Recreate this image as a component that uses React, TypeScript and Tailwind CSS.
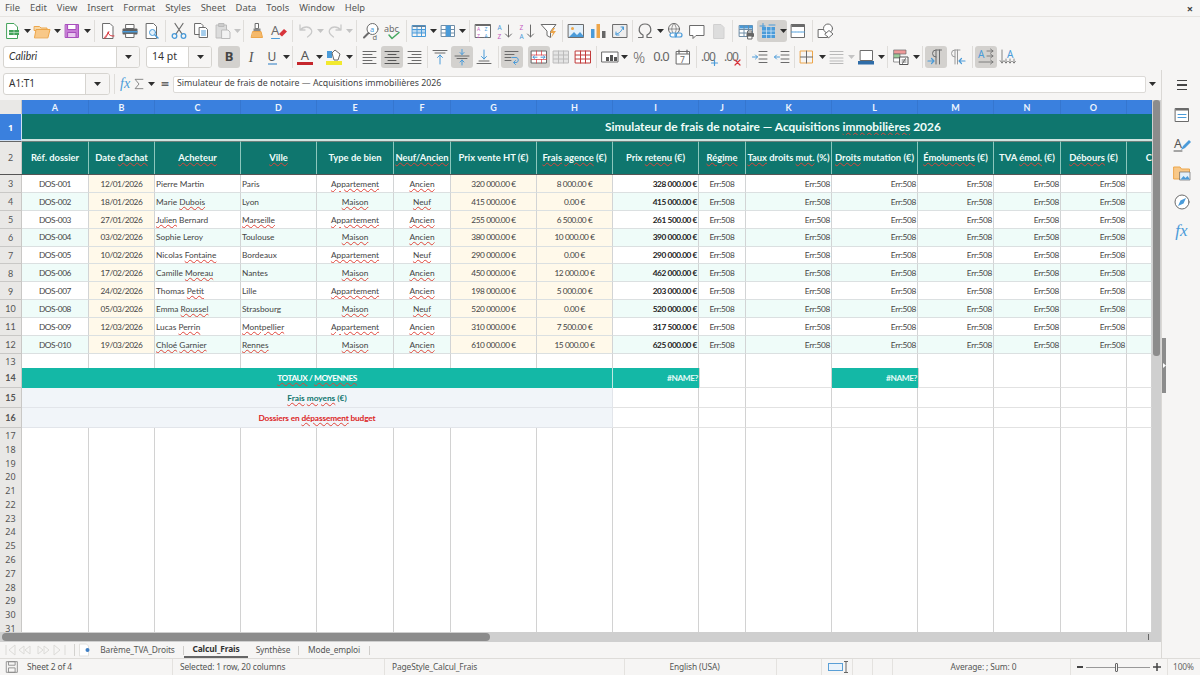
import React from "react";

const BLUE = "#4a9bd9";
const GRAY = "#6b6b6b";
const ORANGE = "#eda64a";
const RED = "#d8343b";

const COLS =
  "grid grid-cols-[22px_67px_66px_86px_76px_77px_57px_86px_76px_86px_47px_86px_86px_76px_67px_66px_25px]";

const Svg: React.FC<{ children: React.ReactNode; size?: number }> = ({ children, size = 18 }) => (
  <svg width={size} height={size} viewBox="0 0 18 18" fill="none" strokeWidth="1" strokeLinecap="round" strokeLinejoin="round">
    {children}
  </svg>
);

const Lines: React.FC<{ d: number[][]; c?: string }> = ({ d, c = GRAY }) => (
  <>
    {d.map(([x1, x2, y], i) => (
      <line key={i} x1={x1} x2={x2} y1={y} y2={y} stroke={c} />
    ))}
  </>
);

const TableGrid: React.FC<{ stroke?: string; fill?: string; head?: string }> = ({ stroke = BLUE, fill = "none", head }) => (
  <>
    <rect x="2.5" y="3.5" width="13" height="11" fill={fill} stroke={stroke} />
    {head && <rect x="2.5" y="3.5" width="13" height="3" fill={head} />}
    <path d="M2.5 7.5h13M2.5 11h13M7 3.5v11M11.5 3.5v11" stroke={stroke} />
  </>
);

const icons: Record<string, React.ReactNode> = {
  newDoc: (
    <>
      <path d="M4 1.5h7l3.5 3.5v11.5H4z" fill="#fff" stroke="#43a35a" />
      <rect x="6" y="8" width="10" height="5" fill="#43a35a" />
      <path d="M6 10.5h10M11 8v5" stroke="#d8f0dd" strokeWidth=".6" />
    </>
  ),
  open: (
    <>
      <path d="M1.5 4.5h5l1.5 1.5h6v2.5h-12.5z" fill="#f7d9a8" stroke={ORANGE} />
      <path d="M1.5 15.5l1.5-8h14l-2 8z" fill="#f8c888" stroke={ORANGE} />
    </>
  ),
  save: (
    <>
      <rect x="2.5" y="2.5" width="13" height="13" fill="#c77bd6" stroke="#a84fbd" />
      <rect x="5" y="2.5" width="8" height="5" fill="#fff" stroke="#a84fbd" />
      <rect x="5" y="10.5" width="8" height="5" fill="#e8c8ee" stroke="#a84fbd" />
    </>
  ),
  pdf: (
    <>
      <path d="M4 1.5h7l3 3v12H4z" fill="#fff" stroke={GRAY} />
      <path d="M10 10c-3 4-5 5.5-4.5 6.3.7.7 3-3 3.8-6.5 M9 11c1 2 3 3.5 6 3" stroke={RED} />
    </>
  ),
  print: (
    <>
      <rect x="5" y="2.5" width="8" height="4" fill="#fff" stroke={GRAY} />
      <rect x="1.5" y="6.5" width="15" height="6" rx="1" fill="#606060" />
      <rect x="1.5" y="9" width="15" height="1.5" fill={BLUE} />
      <rect x="5" y="11.5" width="8" height="4" fill="#fff" stroke={GRAY} />
    </>
  ),
  preview: (
    <>
      <path d="M3.5 1.5h7l3 3v12h-10z" fill="#fff" stroke={GRAY} />
      <circle cx="9.5" cy="10.5" r="3" fill="#e5f1fa" stroke={BLUE} />
      <path d="M12 13l3 3" stroke={BLUE} strokeWidth="1.5" />
    </>
  ),
  cut: (
    <>
      <path d="M5 1.5l7 10.5M13 1.5l-7 10.5" stroke={GRAY} strokeWidth="1.2" />
      <circle cx="4.5" cy="14" r="2.3" stroke={BLUE} strokeWidth="1.3" />
      <circle cx="13.5" cy="14" r="2.3" stroke={BLUE} strokeWidth="1.3" />
    </>
  ),
  copy: (
    <>
      <path d="M3 1.5h6l2 2v9H3z" fill="#fff" stroke={GRAY} />
      <path d="M7.5 5.5h6l2 2v8h-8z" fill="#fff" stroke={GRAY} />
      <path d="M9.5 9h4M9.5 11h4M9.5 13h4" stroke={BLUE} />
    </>
  ),
  paste: (
    <>
      <rect x="2.5" y="3" width="10" height="13" fill="#dcdcdc" stroke="#bbb" />
      <rect x="5" y="1.5" width="5" height="3" fill="#ccc" stroke="#bbb" />
      <path d="M8 8h6l2 2v6.5H8z" fill="#f2f2f2" stroke="#bbb" />
    </>
  ),
  clone: (
    <>
      <path d="M7.5 1.5h3v5h-3z" fill="#fff" stroke={GRAY} />
      <path d="M5.5 6.5h7v3h-7z" fill="#888" />
      <path d="M5 9.5h8l1.5 6h-11z" fill="#f5b96a" stroke={ORANGE} />
    </>
  ),
  clear: (
    <>
      <text x="1" y="13" fontFamily="'Noto Sans',sans-serif" fontSize="13" fill={GRAY}>A</text>
      <path d="M1.5 16.5h8" stroke={BLUE} />
      <path d="M9 12l5-5 3 2.5-5 5z" fill={RED} />
    </>
  ),
  undo: <path d="M3 3v5h5M3.5 8c3-4 9-4 11 0 1 2.5-1 5-4 7" stroke="#c9c9c9" strokeWidth="1.3" />,
  redo: <path d="M15 3v5h-5M14.5 8c-3-4-9-4-11 0-1 2.5 1 5 4 7" stroke="#c9c9c9" strokeWidth="1.3" />,
  find: (
    <>
      <circle cx="10.5" cy="7" r="5.5" fill="#fff" stroke={GRAY} />
      <text x="8" y="9.5" fontFamily="'Noto Sans',sans-serif" fontSize="7.5" fill={BLUE}>a</text>
      <path d="M6.5 11l-4.5 4.5" stroke={GRAY} strokeWidth="2" />
      <text x="10.5" y="17.5" fontFamily="'Noto Sans',sans-serif" fontSize="7.5" fill={GRAY}>d</text>
    </>
  ),
  spell: (
    <>
      <text x="0" y="9.5" fontFamily="'Noto Sans',sans-serif" fontSize="9" fill={GRAY}>abc</text>
      <path d="M5 13l3 3.5 7-6" stroke="#45a860" strokeWidth="1.5" />
    </>
  ),
  rowT: (
    <>
      <rect x="2.5" y="7.5" width="13" height="3.5" fill="#bcd9f1" />
      <TableGrid />
      <rect x="2.5" y="3.5" width="13" height="1.5" fill="#5f7f99" />
    </>
  ),
  colT: (
    <>
      <TableGrid stroke="#6f8da6" fill="#fff" />
      <rect x="7" y="3.5" width="4.5" height="11" fill={BLUE} />
    </>
  ),
  sort: (
    <>
      <rect x="1.5" y="2.5" width="15" height="13" fill="#fff" stroke={GRAY} />
      <rect x="1.5" y="2.5" width="15" height="1.5" fill={GRAY} />
      <text x="3" y="8.5" fontFamily="'Noto Sans',sans-serif" fontSize="5" fill="#c45cc0">A</text>
      <text x="3" y="15.5" fontFamily="'Noto Sans',sans-serif" fontSize="5" fill="#c45cc0">Z</text>
      <text x="10.5" y="8.5" fontFamily="'Noto Sans',sans-serif" fontSize="5" fill={BLUE}>Z</text>
      <text x="10.5" y="15.5" fontFamily="'Noto Sans',sans-serif" fontSize="5" fill={BLUE}>A</text>
    </>
  ),
  asc: (
    <>
      <text x="1.5" y="7.5" fontFamily="'Noto Sans',sans-serif" fontSize="6.5" fill={BLUE}>A</text>
      <text x="1.5" y="16.5" fontFamily="'Noto Sans',sans-serif" fontSize="6.5" fill="#c45cc0">Z</text>
      <path d="M12.5 3v12M9.5 12l3 3 3-3" stroke={GRAY} />
    </>
  ),
  desc: (
    <>
      <text x="1.5" y="7.5" fontFamily="'Noto Sans',sans-serif" fontSize="6.5" fill="#c45cc0">Z</text>
      <text x="1.5" y="16.5" fontFamily="'Noto Sans',sans-serif" fontSize="6.5" fill={BLUE}>A</text>
      <path d="M12.5 3v12M9.5 12l3 3 3-3" stroke={GRAY} />
    </>
  ),
  filter: (
    <>
      <path d="M1.5 2.5h14.5l-5.5 7v6l-3.5-2v-4z" fill="#fff" stroke={GRAY} />
      <path d="M13 6l-3 5h3l-2 5 5-7h-3l2-3z" fill={ORANGE} />
    </>
  ),
  image: (
    <>
      <rect x="1.5" y="2.5" width="15" height="13" fill="#e3f0fa" stroke={GRAY} />
      <circle cx="5.5" cy="6.5" r="1.5" fill={ORANGE} />
      <path d="M2 15l5-5 3 3 3-3 3.5 4v1z" fill={BLUE} />
    </>
  ),
  chart: (
    <>
      <rect x="2" y="7" width="3.5" height="9" fill={BLUE} />
      <rect x="7.5" y="2" width="3.5" height="14" fill={ORANGE} />
      <rect x="13" y="9" width="3.5" height="7" fill="#666" />
    </>
  ),
  pivot: (
    <>
      <rect x="2" y="2.5" width="14" height="13" fill="#eee" stroke={GRAY} />
      <path d="M5 12c3 0 6-3 7-7M10 5h2.5v2.5M5 10v3h3" stroke={BLUE} />
    </>
  ),
  omega: <path d="M2.5 15.5h4.5v-2.500c-6-3-4.500-11 2-11s8 8 2 11v2.500h4.500" stroke={GRAY} strokeWidth="1.2" />,
  link: (
    <>
      <circle cx="8" cy="7" r="5.5" stroke={GRAY} />
      <path d="M2.5 7h11M8 1.5c-3 3-3 8 0 11M8 1.5c3 3 3 8 0 11" stroke={GRAY} strokeWidth=".7" />
      <rect x="4" y="11" width="6.5" height="4" rx="2" fill="#fff" stroke={BLUE} strokeWidth="1.2" />
      <rect x="9" y="11" width="7" height="4" rx="2" stroke={BLUE} strokeWidth="1.2" />
    </>
  ),
  comment: <path d="M2 3.5h14v10h-8l-3 3v-3h-3z" fill="#fff" stroke={GRAY} />,
  headers: <path d="M4 2.5h7l3 3v11H4z" fill="#ddd" stroke="#d0d0d0" />,
  printArea: (
    <>
      <TableGrid stroke="#6f8da6" fill="#fff" head={BLUE} />
      <rect x="9.5" y="11" width="7.5" height="4" rx="1" fill="#666" />
      <rect x="11" y="9" width="4" height="2" fill="#fff" stroke="#666" />
      <rect x="11" y="14" width="4" height="3" fill="#fff" stroke="#666" />
    </>
  ),
  freeze: (
    <>
      <rect x="3" y="5" width="13" height="11" fill={BLUE} />
      <path d="M3 9h13M3 12.5h13M7.5 5v11M12 5v11" stroke="#dbeaf6" strokeWidth=".7" />
      <path d="M1 4h5M4 1.5v5M10 3h6" stroke={BLUE} />
    </>
  ),
  split: (
    <>
      <rect x="2.5" y="2.5" width="13" height="13" fill="#fff" stroke={GRAY} />
      <rect x="2.5" y="2.5" width="13" height="2.5" fill={GRAY} />
      <path d="M2.5 10h13" stroke={BLUE} strokeDasharray="2 1" />
    </>
  ),
  shapes: (
    <>
      <rect x="1.5" y="7.5" width="9" height="8" fill="#fff" stroke={GRAY} />
      <circle cx="11" cy="6.5" r="4.5" fill="#fff" stroke={GRAY} />
      <path d="M8 12l4-3.5 4 3.5-4 3.5z" fill="#fff" stroke={GRAY} />
    </>
  ),
  alignL: <Lines d={[[2, 15, 3.5], [2, 11, 6.5], [2, 15, 9.5], [2, 11, 12.5], [2, 15, 15.5]]} />,
  alignC: <Lines d={[[2, 16, 3.5], [5, 13, 6.5], [2, 16, 9.5], [5, 13, 12.5], [2, 16, 15.5]]} c="#555" />,
  alignR: <Lines d={[[3, 16, 3.5], [7, 16, 6.5], [3, 16, 9.5], [7, 16, 12.5], [3, 16, 15.5]]} />,
  vTop: (
    <>
      <Lines d={[[2, 16, 2.5], [4, 14, 5]]} />
      <path d="M9 16v-9M6.5 9.5l2.5-2.5 2.5 2.5" stroke={BLUE} />
    </>
  ),
  vCenter: (
    <>
      <Lines d={[[2, 16, 8], [4, 14, 10.5]]} />
      <path d="M9 1.5v5M7 4.5l2 2 2-2M9 17v-5M7 14l2-2 2 2" stroke={BLUE} />
    </>
  ),
  vBottom: (
    <>
      <path d="M9 2v9M6.5 8.5l2.5 2.500 2.500-2.500" stroke={BLUE} />
      <Lines d={[[4, 14, 13], [2, 16, 15.5]]} />
    </>
  ),
  wrap: (
    <>
      <Lines d={[[2, 15, 3.5], [2, 11, 6.5], [2, 8, 9.5], [2, 8, 12.5]]} />
      <path d="M9 9.5h4c3 0 3 5 0 5h-2M12.5 12.5l-2 2 2 2" stroke={BLUE} />
    </>
  ),
  merge: (
    <>
      <rect x="1.5" y="3" width="15" height="12" fill="#fff" stroke={GRAY} />
      <path d="M1.5 7h15M1.5 11.5h15M6.5 3v4M11.5 3v4M6.5 11.5v3.5M11.5 11.5v3.5" stroke={RED} strokeWidth=".7" />
      <path d="M3 9.2h4M15 9.2h-4M4.5 7.8L3 9.2l1.500 1.400M13.500 7.800L15 9.200l-1.500 1.400" stroke={BLUE} />
    </>
  ),
  mergeD: (
    <>
      <rect x="1.5" y="3" width="15" height="12" fill="#e5e5e5" stroke="#bbb" />
      <path d="M1.5 7h15M1.5 11h15M6.5 3v12M11.5 3v12" stroke="#bbb" />
    </>
  ),
  unmerge: (
    <>
      <rect x="1.5" y="3" width="15" height="12" fill="#fff" stroke="#c23c3c" />
      <path d="M1.5 7h15M1.5 11h15M6.5 3v12M11.5 3v12" stroke="#c23c3c" />
    </>
  ),
  currency: (
    <>
      <rect x="1" y="4" width="16" height="10" fill="#fff" stroke={GRAY} />
      <rect x="5" y="9" width="3" height="4" fill="#555" />
      <rect x="9" y="7" width="3" height="6" fill="#555" />
      <rect x="13" y="9" width="3" height="4" fill="#555" />
    </>
  ),
  date: (
    <>
      <rect x="2.5" y="3.5" width="13" height="12.5" fill="#fff" stroke={GRAY} />
      <path d="M2.5 6h13M5 2v3M13 2v3" stroke={GRAY} strokeWidth="1.2" />
      <text x="6" y="14.5" fontFamily="'Noto Sans',sans-serif" fontSize="8.5" fill={GRAY}>7</text>
    </>
  ),
  decAdd: (
    <>
      <text x="0" y="13" fontFamily="'Noto Sans',sans-serif" fontSize="12" letterSpacing="-1" fill={GRAY}>.00</text>
      <path d="M13.5 12v5.500M10.500 15h6" stroke={BLUE} strokeWidth="1.2" />
    </>
  ),
  decDel: (
    <>
      <text x="0" y="13" fontFamily="'Noto Sans',sans-serif" fontSize="12" letterSpacing="-1" fill={GRAY}>.00</text>
      <path d="M11 12l5 5M16 12l-5 5" stroke={RED} strokeWidth="1.2" />
    </>
  ),
  indent: (
    <>
      <Lines d={[[8, 16, 3.5], [8, 16, 7], [8, 16, 11], [8, 16, 14.5]]} />
      <path d="M1.5 9h5M4.500 7l2 2-2 2" stroke={BLUE} />
    </>
  ),
  outdent: (
    <>
      <Lines d={[[8, 16, 3.5], [8, 16, 7], [8, 16, 11], [8, 16, 14.5]]} />
      <path d="M6.5 9h-5M3.500 7l-2 2 2 2" stroke={BLUE} />
    </>
  ),
  borders: (
    <>
      <rect x="2.5" y="3" width="12" height="12" stroke={ORANGE} />
      <path d="M8.5 3v12M2.5 9h12" stroke={GRAY} />
    </>
  ),
  lineStyle: <Lines d={[[2, 15, 3.5], [2, 15, 6.5], [2, 15, 10], [2, 15, 13], [2, 15, 15.5]]} c="#b9b9b9" />,
  borderColor: (
    <>
      <rect x="3.5" y="2.5" width="12" height="10" fill="#fff" stroke={GRAY} />
      <rect x="1" y="13" width="16" height="3.5" fill="#2f6da8" />
    </>
  ),
  cond: (
    <>
      <rect x="2" y="2" width="12" height="4" fill="#e99" stroke={GRAY} strokeWidth=".7" />
      <rect x="2" y="6" width="6" height="4" fill="#9c9" stroke={GRAY} strokeWidth=".7" />
      <rect x="2" y="10" width="6" height="4" fill="#fff" stroke={GRAY} strokeWidth=".7" />
      <rect x="8" y="9" width="8" height="7.5" fill="#fff" stroke="#555" />
      <path d="M10 12h4M10 14h4M13.5 10.5l-3 5" stroke="#555" strokeWidth=".8" />
    </>
  ),
  ltr: (
    <>
      <path d="M9 2v14M12.5 2v14M14.5 2H9a3.5 3.5 0 0 0 0 7" stroke={GRAY} />
      <path d="M1 13h6M4.5 10.5L7 13l-2.500 2.500" stroke={BLUE} strokeWidth="1.2" />
    </>
  ),
  rtl: (
    <>
      <path d="M6 2v14M8.5 2v14M11 2H6a3.5 3.5 0 0 0 0 7" stroke="#9a9a9a" />
      <path d="M16 13h-6M12.5 10.5L10 13l2.500 2.500" stroke={BLUE} strokeWidth="1.2" />
    </>
  ),
  horiz: (
    <>
      <text x="1" y="9.5" fontFamily="'Noto Sans',sans-serif" fontSize="10" fill={BLUE}>A</text>
      <path d="M10 3h6M13.5 1l2.500 2-2.500 2M10 8h6M13.500 6l2.500 2-2.500 2M2 14h14M13.500 12l2.500 2-2.500 2" stroke={GRAY} strokeWidth=".8" />
    </>
  ),
  vert: (
    <>
      <text x="8" y="9.5" fontFamily="'Noto Sans',sans-serif" fontSize="10" fill={BLUE}>A</text>
      <path d="M3 2v13M1 12.500L3 15l2-2.500M7 11v4M5.500 13.500L7 15l1.500-1.500M11 11v4M9.500 13.500L11 15l1.500-1.500M15 11v4M13.500 13.500L15 15l1.500-1.500" stroke={GRAY} strokeWidth=".8" />
    </>
  ),
  sideProps: (
    <>
      <rect x="2.5" y="2.5" width="13" height="13" fill="#fff" stroke={GRAY} />
      <rect x="2.5" y="2.5" width="13" height="2" fill={GRAY} />
      <path d="M5 8.5h8M5 11.5h8" stroke={BLUE} />
    </>
  ),
  sideStyles: (
    <>
      <text x="1" y="12.5" fontFamily="'Noto Sans',sans-serif" fontSize="12.5" fill="#555">A</text>
      <path d="M1 16h8" stroke="#555" />
      <path d="M16 5l-6 6-2 4 4-2 6-6z" fill={BLUE} />
    </>
  ),
  sideGallery: (
    <>
      <path d="M1 3h6l1.5 2h8v10H1z" fill="#f8c888" stroke={ORANGE} />
      <rect x="7" y="8" width="10" height="8" fill="#e3f0fa" stroke={GRAY} strokeWidth=".7" />
      <path d="M7.5 15.5l3-3.500 2 2 2-2 2.500 3.500z" fill={BLUE} />
    </>
  ),
  sideNav: (
    <>
      <circle cx="9" cy="9" r="7" fill="#fff" stroke={GRAY} />
      <path d="M13 5l-2.500 5.500L5 13l2.500-5.500z" fill={BLUE} />
    </>
  ),
  statusSave: (
    <>
      <rect x="3" y="3" width="12" height="12" stroke="#8a8a8a" />
      <rect x="5.5" y="3" width="7" height="4" stroke="#8a8a8a" />
      <rect x="5.5" y="10" width="7" height="5" stroke="#8a8a8a" />
    </>
  ),
};

const Btn: React.FC<{ i: string; on?: boolean }> = ({ i, on }) => (
  <div className={`flex h-[22px] w-[22px] shrink-0 items-center justify-center rounded-[3px] ${on ? "bg-[#d3d1ce]" : ""}`}>
    <Svg>{icons[i]}</Svg>
  </div>
);

const Caret: React.FC<{ c?: string }> = ({ c = "#2e2e2e" }) => (
  <svg width="7" height="4" viewBox="0 0 7 4">
    <path d="M0 0h7L3.5 4z" fill={c} />
  </svg>
);

const Dd: React.FC<{ w?: string; c?: string }> = ({ w = "w-[8px]", c }) => (
  <div className={`flex h-[22px] shrink-0 items-center justify-center ${w}`}>
    <Caret c={c} />
  </div>
);

const Sep: React.FC<{ w?: string }> = ({ w = "w-[5px]" }) => (
  <div className={`flex h-[22px] shrink-0 justify-center ${w}`}>
    <div className="h-full w-px bg-[#dfddda]" />
  </div>
);

const Toolbar1 = () => (
  <div className="flex h-[27px] items-center pl-px">
    <Btn i="newDoc" /><Dd />
    <Btn i="open" /><Dd />
    <Btn i="save" /><Dd />
    <Sep w="w-[6px]" />
    <Btn i="pdf" /><Btn i="print" /><Btn i="preview" />
    <Sep />
    <Btn i="cut" /><Btn i="copy" /><Btn i="paste" /><Dd w="w-[7px]" c="#c4c4c4" />
    <Sep />
    <Btn i="clone" /><Btn i="clear" />
    <Sep />
    <Btn i="undo" /><Dd w="w-[7px]" c="#c4c4c4" /><Btn i="redo" /><Dd w="w-[7px]" c="#c4c4c4" />
    <Sep w="w-[7px]" />
    <Btn i="find" /><Btn i="spell" />
    <Sep w="w-[4px]" />
    <Btn i="rowT" /><Dd w="w-[7px]" /><Btn i="colT" /><Dd w="w-[7px]" />
    <Sep w="w-[6px]" />
    <Btn i="sort" /><Btn i="asc" /><Btn i="desc" /><Btn i="filter" />
    <Sep />
    <Btn i="image" /><Btn i="chart" /><Btn i="pivot" />
    <Sep w="w-[3px]" />
    <Btn i="omega" /><Dd /><Btn i="link" /><Btn i="comment" /><Btn i="headers" />
    <Sep />
    <Btn i="printArea" />
    <div className="flex h-[22px] items-center rounded-[3px] bg-[#d3d1ce]">
      <Btn i="freeze" /><Dd />
    </div>
    <Btn i="split" />
    <Sep w="w-[6px]" />
    <Btn i="shapes" />
  </div>
);

const Combo: React.FC<{ w: string; drop: string; children: React.ReactNode }> = ({ w, drop, children }) => (
  <div className={`flex h-[22px] shrink-0 overflow-hidden rounded-[3px] border border-[#d6d4d0] bg-white ${w}`}>
    <div className="flex min-w-0 flex-1 items-center pl-[5px] text-[#333]">{children}</div>
    <div className={`flex items-center justify-center border-l border-[#d6d4d0] bg-[#f6f5f4] ${drop}`}>
      <Caret />
    </div>
  </div>
);

const TextBtn: React.FC<{ on?: boolean; w?: string; children: React.ReactNode }> = ({ on, w = "w-[22px]", children }) => (
  <div className={`flex h-[22px] shrink-0 items-center justify-center rounded-[3px] font-['Liberation_Serif',serif] ${w} ${on ? "bg-[#d3d1ce]" : ""}`}>
    {children}
  </div>
);

const Toolbar2 = () => (
  <div className="flex h-[26px] items-center pl-[3px]">
    <Combo w="w-[137px]" drop="w-[23px]">
      <span className="font-['Lato',sans-serif] text-[10.5px] italic">Calibri</span>
    </Combo>
    <div className="w-[6px]" />
    <Combo w="w-[66px]" drop="w-[23px]">
      <span className="text-[10.5px]">14 pt</span>
    </Combo>
    <div className="w-[6px]" />
    <TextBtn on>
      <span className="font-['Noto_Sans',sans-serif] text-[13px] font-bold text-[#444]">B</span>
    </TextBtn>
    <TextBtn>
      <span className="text-[14px] italic text-[#555]">I</span>
    </TextBtn>
    <TextBtn w="w-[20px]">
      <span className="flex flex-col items-center font-['Noto_Sans',sans-serif] text-[12px] leading-[13px] text-[#555]">
        U
        <span className="h-[2px] w-[9px] bg-[#8fb8dc]" />
      </span>
    </TextBtn>
    <Dd />
    <Sep w="w-[4px]" />
    <TextBtn>
      <span className="flex flex-col items-center font-['Noto_Sans',sans-serif] text-[13px] leading-[13px] text-[#555]">
        A
        <span className="h-[3px] w-[16px] bg-[#c5262c]" />
      </span>
    </TextBtn>
    <Dd w="w-[7px]" />
    <div className="flex h-[22px] w-[22px] shrink-0 flex-col items-center justify-center">
      <svg width="16" height="12" viewBox="0 0 16 12">
        <path d="M1 2h5v7H1z" fill={BLUE} />
        <path d="M6 4l3-3 5 4-2 6H8z" fill="#fff" stroke={GRAY} />
      </svg>
      <span className="h-[4px] w-[16px] bg-[#f2e92e]" />
    </div>
    <Dd />
    <Sep w="w-[6px]" />
    <Btn i="alignL" /><Btn i="alignC" on /><Btn i="alignR" />
    <Sep w="w-[4px]" />
    <Btn i="vTop" /><Btn i="vCenter" on /><Btn i="vBottom" />
    <Sep w="w-[6px]" />
    <Btn i="wrap" on />
    <div className="w-[5px]" />
    <Btn i="merge" on /><Btn i="mergeD" /><Btn i="unmerge" />
    <Sep />
    <Btn i="currency" /><Dd w="w-[7px]" />
    <TextBtn>
      <span className="font-['Noto_Sans',sans-serif] text-[15px] font-light text-[#666]">%</span>
    </TextBtn>
    <TextBtn>
      <span className="font-['Noto_Sans',sans-serif] text-[13px] tracking-[-1px] text-[#666]">0.0</span>
    </TextBtn>
    <Btn i="date" />
    <Sep />
    <Btn i="decAdd" />
    <div className="w-px" />
    <Btn i="decDel" />
    <Sep />
    <Btn i="indent" /><Btn i="outdent" />
    <Sep w="w-[3px]" />
    <Btn i="borders" /><Dd />
    <Btn i="lineStyle" /><Dd w="w-[7px]" c="#c4c4c4" />
    <Btn i="borderColor" /><Dd />
    <Sep />
    <Btn i="cond" /><Dd />
    <Sep />
    <Btn i="ltr" on /><Btn i="rtl" />
    <Sep w="w-[6px]" />
    <Btn i="horiz" on /><Btn i="vert" />
  </div>
);

const FormulaBar = () => (
  <div className="flex h-[27px] items-center pl-[3px] pr-[3px]">
    <Combo w="w-[107px]" drop="w-[24px]">
      <span className="text-[10px]">A1:T1</span>
    </Combo>
    <div className="ml-[4px] flex w-[59px] shrink-0 items-center">
      <div className="mr-[3px] h-[20px] w-px bg-[#dfddda]" />
      <span className="w-[14px] pl-[2px] font-['Liberation_Serif',serif] text-[14px] italic text-[#4a9bd9]">fx</span>
      <Svg size={14}>
        <path d="M14 3H4l5 6-5 6h10" stroke={GRAY} />
      </Svg>
      <span className="ml-[2px] flex"><Caret /></span>
      <span className="ml-[6px] font-['Noto_Sans',sans-serif] text-[14px] font-bold leading-none text-[#666]">=</span>
    </div>
    <div className="mt-px flex h-[17px] flex-1 items-center rounded-[2px] border border-[#dcdad7] bg-white pl-[3px] text-[8.8px] text-[#444]">
      Simulateur de frais de notaire — Acquisitions immobilières 2026
    </div>
    <div className="flex w-[12px] shrink-0 justify-center">
      <Caret />
    </div>
  </div>
);

// word prefixed by ~ gets the spell-check underline
const Txt: React.FC<{ t: string }> = ({ t }) => (
  <>
    {t.split(" ").map((w, i) => (
      <React.Fragment key={i}>
        {i > 0 && " "}
        {w.startsWith("~") ? (
          <span className="underline decoration-[#e0453a] decoration-wavy decoration-[0.6px] underline-offset-[0.5px]">
            {w.slice(1)}
          </span>
        ) : (
          w
        )}
      </React.Fragment>
    ))}
  </>
);

const RowHead: React.FC<{ n: number; sel?: boolean }> = ({ n, sel }) => (
  <div
    className={`flex items-center justify-center border-b border-r pt-px text-[9px] ${
      sel ? "border-[#cfe0f5] bg-[#3a80de] font-bold text-white" : "border-[#c9c8c6] bg-[#e9e8e6] text-[#555]"
    }`}
  >
    {n}
  </div>
);

const LETTERS = "ABCDEFGHIJKLMNO".split("");

const ColumnHeader = () => (
  <div className={`${COLS} h-[14px] font-['Lato',sans-serif] text-[9px] font-bold text-[#eef5fd]`}>
    <div className="border-b border-r border-[#c9c8c6] bg-[#e9e8e6]" />
    {LETTERS.concat("").map((l, i) => (
      <div key={i} className="flex items-center justify-center border-b border-r border-b-[#d7e6f8] border-r-[#3576cf] bg-[#3a80de] pt-px">
        {l}
      </div>
    ))}
  </div>
);

const TitleRow = () => (
  <div className={`${COLS} h-[27px]`}>
    <RowHead n={1} sel />
    <div className="col-span-16 flex items-center border-b-2 border-b-[#cfe3df] bg-[#0f766e] pl-[583px] font-['Lato',sans-serif] text-[11.9px] font-bold whitespace-nowrap text-[#f0fdfa]">
      <span className="overflow-hidden">
        <Txt t="Simulateur de frais de notaire — Acquisitions ~immobilières 2026" />
      </span>
    </div>
  </div>
);

const HEADERS = [
  "Réf. dossier",
  "Date ~d'achat",
  "~Acheteur",
  "~Ville",
  "Type de bien",
  "~Neuf/Ancien",
  "Prix vente HT (€)",
  "~Frais ~agence (€)",
  "Prix ~retenu (€)",
  "~Régime",
  "~Taux droits ~mut. (%)",
  "~Droits mutation (€)",
  "~Émoluments (€)",
  "TVA ~émol. (€)",
  "~Débours (€)",
  "C",
];

const HeaderRow = () => (
  <div className={`${COLS} h-[34px] border-b border-[#555]`}>
    <div className="flex items-center justify-center border-r border-t border-[#c9c8c6] border-t-[#666] bg-[#e9e8e6] text-[9px] text-[#555]">
      2
    </div>
    {HEADERS.map((h, i) => (
      <div
        key={i}
        className={`flex items-center overflow-hidden border-r border-t border-r-[#8cc7bd] border-t-[#6b7f7b] bg-[#0f766e] font-['Lato',sans-serif] text-[9.4px] font-bold whitespace-nowrap text-[#f0fdfa] ${
          i === 15 ? "justify-end border-r-0" : "justify-center"
        }`}
      >
        <span>
          <Txt t={h} />
        </span>
      </div>
    ))}
  </div>
);

const DATA = [
  ["DOS-001", "12/01/2026", "Pierre Martin", "Paris", "~Appartement", "~Ancien", "320 000.00 €", "8 000.00 €", "328 000.00 €"],
  ["DOS-002", "18/01/2026", "Marie ~Dubois", "Lyon", "~Maison", "~Neuf", "415 000.00 €", "0.00 €", "415 000.00 €"],
  ["DOS-003", "27/01/2026", "~Julien Bernard", "~Marseille", "~Appartement", "~Ancien", "255 000.00 €", "6 500.00 €", "261 500.00 €"],
  ["DOS-004", "03/02/2026", "Sophie Leroy", "Toulouse", "~Maison", "~Ancien", "380 000.00 €", "10 000.00 €", "390 000.00 €"],
  ["DOS-005", "10/02/2026", "Nicolas ~Fontaine", "Bordeaux", "~Appartement", "~Neuf", "290 000.00 €", "0.00 €", "290 000.00 €"],
  ["DOS-006", "17/02/2026", "Camille ~Moreau", "Nantes", "~Maison", "~Ancien", "450 000.00 €", "12 000.00 €", "462 000.00 €"],
  ["DOS-007", "24/02/2026", "Thomas ~Petit", "Lille", "~Appartement", "~Ancien", "198 000.00 €", "5 000.00 €", "203 000.00 €"],
  ["DOS-008", "05/03/2026", "Emma ~Roussel", "Strasbourg", "~Maison", "~Neuf", "520 000.00 €", "0.00 €", "520 000.00 €"],
  ["DOS-009", "12/03/2026", "Lucas ~Perrin", "~Montpellier", "~Appartement", "~Ancien", "310 000.00 €", "7 500.00 €", "317 500.00 €"],
  ["DOS-010", "19/03/2026", "~Chloé ~Garnier", "~Rennes", "~Maison", "~Ancien", "610 000.00 €", "15 000.00 €", "625 000.00 €"],
];

const DataRow: React.FC<{ n: number; d: string[] }> = ({ n, d }) => {
  const band = n % 2 === 0 ? "bg-[#effcf9]" : "bg-white";
  const base = "flex items-center overflow-hidden whitespace-nowrap border-b border-r border-b-[#dbe0e1] border-r-[#d2d4d5] pt-px";
  const num = "tracking-[-0.42px]";
  return (
    <div className={`${COLS} h-[17.9px] font-['Lato',sans-serif] text-[8.3px] text-[#444]`}>
      <RowHead n={n} />
      <div className={`${base} ${band} ${num} justify-center`}>{d[0]}</div>
      <div className={`${base} ${num} bg-[#fff9ea] justify-center`}>{d[1]}</div>
      <div className={`${base} ${band} pl-px`}><span><Txt t={d[2]} /></span></div>
      <div className={`${base} ${band} pl-px`}><span><Txt t={d[3]} /></span></div>
      <div className={`${base} ${band} justify-center`}><span><Txt t={d[4]} /></span></div>
      <div className={`${base} ${band} justify-center`}><span><Txt t={d[5]} /></span></div>
      <div className={`${base} ${num} bg-[#fff9ea] justify-center`}>{d[6]}</div>
      <div className={`${base} ${num} bg-[#fff9ea] justify-center`}>{d[7]}</div>
      <div className={`${base} ${band} ${num} justify-end pr-px font-bold text-[#222]`}>{d[8]}</div>
      <div className={`${base} ${band} justify-center tracking-[-0.3px]`}>Err:508</div>
      {[0, 1, 2, 3, 4].map((k) => (
        <div key={k} className={`${base} ${band} justify-end pr-px tracking-[-0.3px]`}>Err:508</div>
      ))}
      <div className={`${base} ${band}`} />
    </div>
  );
};

const Empty: React.FC<{ from?: number }> = ({ from = 0 }) => (
  <>
    {Array.from({ length: 16 - from }).map((_, i) => (
      <div key={i} className="border-b border-r border-b-[#e2e2e2] border-r-[#d2d2d2] bg-white" />
    ))}
  </>
);

const Summary = () => (
  <>
    <div className={`${COLS} h-[14px]`}>
      <RowHead n={13} />
      <Empty />
    </div>
    <div className={`${COLS} h-[20px] font-['Lato',sans-serif] text-[8.3px] font-bold`}>
      <RowHead n={14} />
      <div className="col-span-8 flex items-center justify-center border-r border-[#bfe9e2] bg-[#14b8a6] pt-px tracking-[-0.45px] text-white">
        <span><Txt t="~TOTAUX / ~MOYENNES" /></span>
      </div>
      <div className="flex items-center justify-end bg-[#14b8a6] pr-px pt-px tracking-[-0.4px] text-[#e6fbf7]">#NAME?</div>
      <div className="border-b border-r border-b-[#e2e2e2] border-r-[#d2d2d2] border-l border-l-[#d2d2d2] bg-white" />
      <div className="border-b border-r border-b-[#e2e2e2] border-r-[#d2d2d2] bg-white" />
      <div className="flex items-center justify-end bg-[#14b8a6] pr-px pt-px tracking-[-0.4px] text-[#e6fbf7]">#NAME?</div>
      <div className="border-b border-r border-b-[#e2e2e2] border-r-[#d2d2d2] border-l border-l-[#d2d2d2] bg-white" />
      <div className="border-b border-r border-b-[#e2e2e2] border-r-[#d2d2d2] bg-white" />
      <div className="border-b border-r border-b-[#e2e2e2] border-r-[#d2d2d2] bg-white" />
      <div className="border-b border-r border-b-[#e2e2e2] border-r-[#d2d2d2] bg-white" />
    </div>
    <div className={`${COLS} h-[20px] font-['Lato',sans-serif] text-[8.3px] font-bold`}>
      <RowHead n={15} />
      <div className="col-span-8 flex items-center justify-center border-b border-r border-[#e2e5ea] bg-[#f1f5f9] pt-px text-[#0f766e]">
        <span><Txt t="~Frais ~moyens (€)" /></span>
      </div>
      <Empty from={8} />
    </div>
    <div className={`${COLS} h-[20px] font-['Lato',sans-serif] text-[8.3px] font-bold`}>
      <RowHead n={16} />
      <div className="col-span-8 flex items-center justify-center border-b border-r border-[#e2e5ea] bg-[#f1f5f9] pt-px tracking-[-0.15px] text-[#dc2626]">
        <span><Txt t="Dossiers en ~dépassement budget" /></span>
      </div>
      <Empty from={8} />
    </div>
  </>
);

const Sheet = () => (
  <div className="mt-[3px] flex min-h-0 flex-1">
    <div className="w-[1152px] shrink-0 overflow-hidden">
      <ColumnHeader />
      <TitleRow />
      <HeaderRow />
      {DATA.map((d, i) => (
        <DataRow key={i} n={i + 3} d={d} />
      ))}
      <Summary />
      {Array.from({ length: 15 }).map((_, i) => (
        <div key={i} className={`${COLS} h-[13.8px]`}>
          <RowHead n={i + 17} />
          <Empty />
        </div>
      ))}
    </div>
    <div className="flex-1 bg-[#cfcfcf] px-px">
      <div className="h-[256px] w-full rounded-[3px] bg-[#8c8c8c]" />
    </div>
  </div>
);

const HScroll = () => (
  <div className="relative flex h-[10px] bg-[#cfcfcf] py-px pl-[2px]">
    <div className="h-full w-[488px] rounded-[4px] bg-[#8c8c8c]" />
    <div className="absolute right-[12px] top-[2px] h-[6px] w-px bg-[#666]" />
  </div>
);

const Tab: React.FC<{ label: string; w: string; on?: boolean }> = ({ label, w, on }) => (
  <div
    className={`flex h-full shrink-0 items-center justify-center text-[8.4px] tracking-[-0.12px] ${w} ${
      on ? "border-b-[2px] border-[#666] font-bold text-[#333]" : "text-[#555]"
    }`}
  >
    {label}
  </div>
);

const TabSep = () => <div className="h-[9px] w-px shrink-0 bg-[#cfcdca]" />;

const TabBar = () => (
  <div className="flex h-[16px] items-center font-['Noto_Sans',sans-serif]">
    <div className="flex w-[74px] shrink-0 items-center pl-[5px]">
      <svg width="62" height="12" viewBox="0 0 62 12" fill="none" stroke="#dcdbd8">
        <path d="M1 1v10M10 1L4 6l6 5zM19 2l-5 4 5 4zM25 2l-5 4 5 4zM33 2l5 4-5 4zM39 2l5 4-5 4zM49 1l6 5-6 5zM60 1v10" />
      </svg>
    </div>
    <div className="h-[12px] w-px shrink-0 bg-[#d3d2cf]" />
    <div className="flex w-[24px] shrink-0 items-center pl-[3px]">
      <svg width="14" height="14" viewBox="0 0 14 14">
        <path d="M1.5 1h7l2 2v10h-9z" fill="#fff" stroke="#e3e2df" />
        <circle cx="9.5" cy="7" r="2" fill="#3f7fc4" />
      </svg>
    </div>
    <Tab label="Barème_TVA_Droits" w="w-[84px] pr-[7px]" />
    <TabSep />
    <Tab label="Calcul_Frais" w="w-[64px]" on />
    <Tab label="Synthèse" w="w-[50px]" />
    <TabSep />
    <Tab label="Mode_emploi" w="w-[70px]" />
    <TabSep />
  </div>
);

const Sidebar = () => (
  <div className="relative flex w-[39px] shrink-0 flex-col items-center border-l border-[#dad8d5] pl-[1px] pt-[7px]">
    <div className="flex h-[16px] flex-col justify-center gap-[3px]">
      <div className="h-[1.5px] w-[10px] bg-[#444]" />
      <div className="h-[1.5px] w-[10px] bg-[#444]" />
      <div className="h-[1.5px] w-[10px] bg-[#444]" />
    </div>
    <div className="mt-[13px] flex flex-col items-center gap-[11px]">
      <Svg>{icons.sideProps}</Svg>
      <Svg>{icons.sideStyles}</Svg>
      <Svg>{icons.sideGallery}</Svg>
      <Svg>{icons.sideNav}</Svg>
      <div className="font-['Liberation_Serif',serif] text-[17px] leading-[18px] italic text-[#4a9bd9]">fx</div>
    </div>
    <div className="absolute left-0 top-[268px] flex h-[55px] w-[4px] items-center justify-center bg-[#8c8c8c]">
      <svg width="3" height="5" viewBox="0 0 3 5">
        <path d="M0 0l3 2.5L0 5z" fill="#fff" />
      </svg>
    </div>
  </div>
);

const Stat: React.FC<{ w: string; className?: string; children?: React.ReactNode }> = ({ w, className = "", children }) => (
  <div className={`flex h-full shrink-0 items-center border-r border-[#e4e2df] ${w} ${className}`}>{children}</div>
);

const StatusBar = () => (
  <div className="flex h-[17px] items-center border-t border-[#dedcd9] font-['Noto_Sans',sans-serif] text-[8.4px] tracking-[-0.12px] text-[#555]">
    <Stat w="w-[173px]" className="pl-[4px]">
      <Svg size={16}>{icons.statusSave}</Svg>
      <span className="ml-[7px]">Sheet 2 of 4</span>
    </Stat>
    <Stat w="w-[212px]" className="pl-[7px]">Selected: 1 row, 20 columns</Stat>
    <Stat w="w-[240px]" className="pl-[7px]">PageStyle_Calcul_Frais</Stat>
    <Stat w="w-[152px]" className="justify-center pr-[12px]">English (USA)</Stat>
    <Stat w="w-[45px]" />
    <Stat w="w-[31px]" className="pl-[6px]">
      <svg width="24" height="14" viewBox="0 0 24 14" fill="none">
        <rect x=".5" y="3.5" width="14" height="7" fill="#eaf3fb" stroke="#5a9fd6" />
        <path d="M16 1.5h4M18 1.5v11M16 12.5h4" stroke="#666" />
      </svg>
    </Stat>
    <Stat w="w-[20px]" />
    <Stat w="w-[20px]" />
    <Stat w="w-[178px]" className="justify-center pl-[4px]">Average: ; Sum: 0</Stat>
    <div className="flex h-full w-[97px] shrink-0 items-center border-r border-[#e4e2df] pl-[6px]">
      <div className="h-[1.5px] w-[6px] bg-[#444]" />
      <div className="relative mx-[3px] h-px w-[64px] bg-[#999]">
        <div className="absolute left-[29px] top-[-4px] h-[9px] w-[3px] rounded-[1px] border border-[#666] bg-[#f6f5f4]" />
      </div>
      <svg width="8" height="8" viewBox="0 0 8 8">
        <path d="M0 4h8M4 0v8" stroke="#444" strokeWidth="1.5" />
      </svg>
    </div>
    <div className="flex-1 pl-[5px] text-[#666]">100%</div>
  </div>
);

const MENU = ["File", "Edit", "View", "Insert", "Format", "Styles", "Sheet", "Data", "Tools", "Window", "Help"];

export default function App() {
  return (
    <div className="flex h-[675px] w-[1200px] flex-col overflow-hidden bg-[#f6f5f4] font-['Noto_Sans',sans-serif] text-[#444]">
      <div className="flex h-[17px] items-center border-b border-[#e6e4e1]">
        <div className="flex flex-1 gap-[10px] pl-[5px] text-[9.4px] text-[#555]">
          {MENU.map((m) => (
            <span key={m}>{m}</span>
          ))}
        </div>
        <span className="pr-[7px] text-[11px] font-bold leading-none text-[#444]">×</span>
      </div>
      <Toolbar1 />
      <Toolbar2 />
      <div className="flex min-h-0 flex-1">
        <div className="flex w-[1161px] shrink-0 flex-col">
          <FormulaBar />
          <Sheet />
          <HScroll />
          <TabBar />
        </div>
        <Sidebar />
      </div>
      <StatusBar />
    </div>
  );
}
